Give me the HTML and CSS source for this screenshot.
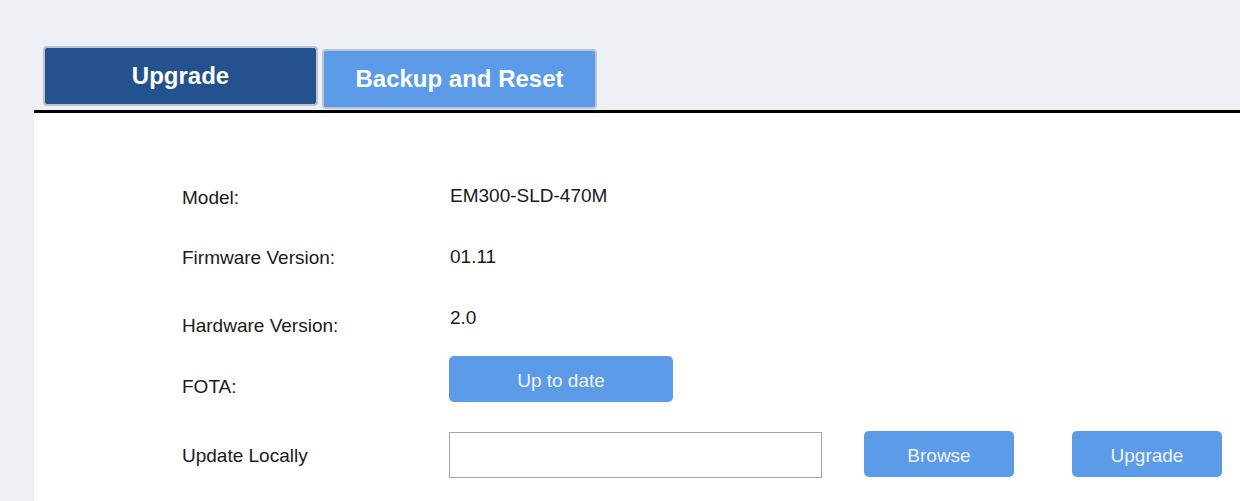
FILE: index.html
```html
<!DOCTYPE html>
<html>
<head>
<meta charset="utf-8">
<link rel="stylesheet" href="styles.css">
</head>
<body>
<div class="page">
  <div class="tabs">
    <div class="tab tab-active">Upgrade</div>
    <div class="tab tab-other">Backup and Reset</div>
  </div>
  <div class="panel">
    <div class="row row1">
      <div class="label l1">Model:</div>
      <div class="value">EM300-SLD-470M</div>
    </div>
    <div class="row row2">
      <div class="label l2">Firmware Version:</div>
      <div class="value">01.11</div>
    </div>
    <div class="row row3">
      <div class="label l3">Hardware Version:</div>
      <div class="value">2.0</div>
    </div>
    <div class="row row4">
      <div class="label l4">FOTA:</div>
      <button class="btn btn-fota">Up to date</button>
    </div>
    <div class="row row5">
      <div class="label l5">Update Locally</div>
      <input class="file-input" type="text">
      <button class="btn btn-browse">Browse</button>
      <button class="btn btn-upgrade">Upgrade</button>
    </div>
  </div>
</div>
</body>
</html>
```
FILE: styles.css
```css
html, body {
  margin: 0;
  padding: 0;
  background: #edf1f6;
  font-family: "Liberation Sans", Arial, sans-serif;
  overflow: hidden;
}
.page {
  margin-left: 34px;
  height: 501px;
  display: flex;
  flex-direction: column;
}
.tabs {
  display: flex;
  align-items: flex-start;
  gap: 4px;
  padding-left: 9px;
  height: 110px;
}
.tab {
  box-sizing: border-box;
  width: 275px;
  height: 60px;
  border: 2px solid #bcc5cf;
  border-radius: 4px;
  color: #fff;
  font-weight: bold;
  font-size: 24px;
  display: flex;
  align-items: center;
  justify-content: center;
}
.tab-active {
  margin-top: 46px;
  background: #24528f;
}
.tab-other {
  margin-top: 49px;
  background: #5c9be8;
}
.panel {
  flex: 1;
  background: #fff;
  border-top: 3px solid #000;
  padding-top: 72px;
  padding-left: 148px;
  color: #1a1a1a;
  font-size: 19px;
  line-height: 22px;
}
.row {
  display: flex;
  align-items: flex-start;
}
.label {
  width: 267px;
  flex: none;
}
.value {
  padding-left: 1px;
}
.row1 { height: 61px; }
.row2 { height: 61px; }
.row3 { height: 49px; }
.row4 { height: 75px; }
.l1 { margin-top: 2px; }
.l2 { margin-top: 1px; }
.l3 { margin-top: 8px; }
.l4 { margin-top: 20px; }
.l5 { margin-top: 14px; }
.btn {
  box-sizing: border-box;
  border: none;
  background: #5c9be8;
  color: #eef4fc;
  font-family: "Liberation Sans", Arial, sans-serif;
  font-size: 19px;
  border-radius: 5px;
  height: 46px;
  padding: 3px 0 0 0;
}
.btn-fota {
  width: 224px;
}
.file-input {
  box-sizing: border-box;
  margin: 1px 0 0 0;
  width: 373px;
  height: 46px;
  border: 1px solid #a5a5a5;
  background: #fff;
  padding: 0;
}
.btn-browse {
  width: 150px;
  margin-left: 42px;
}
.btn-upgrade {
  width: 150px;
  margin-left: 58px;
}
```
